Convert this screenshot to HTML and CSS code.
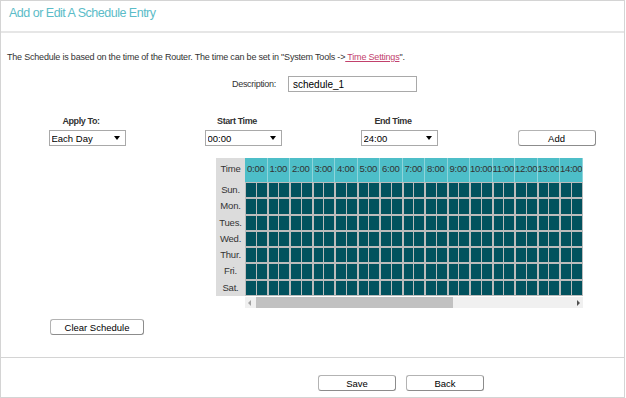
FILE: index.html
```html
<!doctype html>
<html lang="en">
<head>
    <meta charset="utf-8">
    <title>Add or Edit A Schedule Entry</title>
    <link rel="stylesheet" href="styles.css">
</head>
<body>
    <div class="panel">
        <div class="panel-head">Add or Edit A Schedule Entry</div>
        <div class="panel-body">
            <p class="note">The Schedule is based on the time of the Router. The time can be set in "System Tools -&gt;<a href="#"> Time Settings</a>".</p>
            <div class="desc-row">
                <label for="desc">Description:</label>
                <input type="text" id="desc" value="schedule_1">
            </div>
            <div class="time-row">
                <div class="field">
                    <label>Apply To:</label>
                    <div class="select"><select><option>Each Day</option></select></div>
                </div>
                <div class="field">
                    <label>Start Time</label>
                    <div class="select"><select><option>00:00</option></select></div>
                </div>
                <div class="field">
                    <label>End Time</label>
                    <div class="select"><select><option>24:00</option></select></div>
                </div>
                <div class="field">
                    <label>&nbsp;</label>
                    <button class="btn btn-add">Add</button>
                </div>
            </div>
            <div class="schedule">
                <div class="days">
                    <div class="day-head">Time</div>
                    <div class="day">Sun.</div>
                    <div class="day">Mon.</div>
                    <div class="day">Tues.</div>
                    <div class="day">Wed.</div>
                    <div class="day">Thur.</div>
                    <div class="day">Fri.</div>
                    <div class="day">Sat.</div>
                </div>
                <div class="hours-wrap">
                    <div class="hours" id="hours"></div>
                    <div class="scrollbar">
                        <span class="arrow left"></span>
                        <span class="thumb"></span>
                        <span class="arrow right"></span>
                    </div>
                </div>
            </div>
            <div class="clear-row">
                <button class="btn btn-wide">Clear Schedule</button>
            </div>
        </div>
        <div class="panel-foot">
            <button class="btn">Save</button>
            <button class="btn">Back</button>
        </div>
    </div>
    <script>
        var hours = document.getElementById('hours');
        var html = '';
        for (var h = 0; h < 24; h++) {
            html += '<div class="hour-head">' + h + ':00</div>';
        }
        for (var d = 0; d < 7; d++) {
            for (var h = 0; h < 24; h++) {
                html += '<div class="slot"><span></span><span></span></div>';
            }
        }
        hours.innerHTML = html;
    </script>
</body>
</html>
```

FILE: styles.css
```css
body {
    font-family: "Liberation Sans", Arial, sans-serif;
    font-size: 9.5px;
    color: #333;
    margin: 0;
    padding: 0;
    overflow: hidden;
}
.panel {
    width: 623px;
    height: 396px;
    border: 1px solid #d4d4d4;
    overflow: hidden;
}
.panel-head {
    height: 30px;
    line-height: 25px;
    padding-left: 8px;
    font-size: 12.5px;
    letter-spacing: -0.5px;
    color: #5bbcc8;
    border-bottom: 2px solid #e6e6e6;
}
.panel-body {
    height: 324px;
    border-bottom: 1px solid #d4d4d4;
}
.note {
    margin: 0;
    padding: 18px 0 0 6px;
    line-height: 13px;
    font-size: 9px;
    letter-spacing: -0.2px;
}
.note a {
    color: #c2416c;
}
.desc-row {
    display: flex;
    align-items: center;
    margin-top: 12px;
    padding-left: 231px;
}
.desc-row label {
    width: 56px;
    font-size: 9px;
    letter-spacing: -0.3px;
}
.desc-row input {
    width: 119px;
    height: 14px;
    padding: 0 4px;
    border: 1px solid #a9a9a9;
    font: inherit;
    font-size: 10px;
    color: #000;
}
.time-row {
    display: grid;
    grid-template-columns: repeat(4, 156px);
    margin-top: 24px;
    margin-left: 8px;
    width: 624px;
}
.field {
    display: flex;
    flex-direction: column;
    align-items: center;
}
.field label {
    font-weight: bold;
    font-size: 9px;
    letter-spacing: -0.4px;
    height: 14px;
    padding-right: 12px;
}
.select {
    position: relative;
    width: 77px;
}
.select select {
    appearance: none;
    -webkit-appearance: none;
    width: 77px;
    height: 16px;
    padding: 0 2px;
    border: 1px solid #a9a9a9;
    background: #fff;
    font: inherit;
    color: #000;
}
.select::after {
    content: "";
    position: absolute;
    right: 6px;
    top: 6px;
    border-left: 3px solid transparent;
    border-right: 3px solid transparent;
    border-top: 4px solid #000;
    pointer-events: none;
}
.btn {
    width: 78px;
    height: 16px;
    padding: 0;
    border: 1px solid #b3b3b3;
    border-right-color: #8c8c8c;
    border-bottom-color: #8c8c8c;
    border-radius: 3px;
    background: #fff;
    font: inherit;
    color: #000;
}
.btn-add {
    margin-left: 3px;
}
.btn-wide {
    width: 94px;
}
.schedule {
    display: flex;
    margin-top: 12px;
    margin-left: 215px;
}
.days {
    width: 29px;
    height: 138px;
    background: #dcdcdc;
    text-align: center;
    letter-spacing: -0.2px;
}
.day-head {
    height: 24px;
    line-height: 22px;
}
.day {
    height: 16.3px;
    line-height: 16px;
}
.hours-wrap {
    width: 338px;
    overflow: hidden;
}
.hours {
    display: grid;
    grid-template-columns: repeat(24, 22.5px);
    grid-template-rows: 24px repeat(7, 16.3px);
    width: 540px;
}
.hour-head {
    background: #4dbec8;
    border-right: 1px solid #8fd4da;
    text-align: center;
    line-height: 22px;
    letter-spacing: -0.3px;
    white-space: nowrap;
    overflow: hidden;
}
.slot {
    display: flex;
    gap: 1px;
    padding: 1px;
    background: #bcbcbc;
}
.slot span {
    flex: 1;
    background: #02525e;
}
.scrollbar {
    display: flex;
    align-items: center;
    height: 11px;
    margin-top: 1px;
    background: #f0f0f0;
}
.thumb {
    width: 197px;
    height: 11px;
    margin-left: 5px;
    background: #c1c1c1;
}
.arrow {
    width: 0;
    height: 0;
    border-top: 3px solid transparent;
    border-bottom: 3px solid transparent;
}
.arrow.left {
    margin-left: 3px;
    border-right: 3px solid #a3a3a3;
}
.arrow.right {
    margin-left: auto;
    margin-right: 3px;
    border-left: 3px solid #505050;
}
.clear-row {
    margin-top: 11px;
    padding-left: 49px;
}
.panel-foot {
    display: flex;
    gap: 10px;
    padding: 17px 0 0 317px;
}
```
